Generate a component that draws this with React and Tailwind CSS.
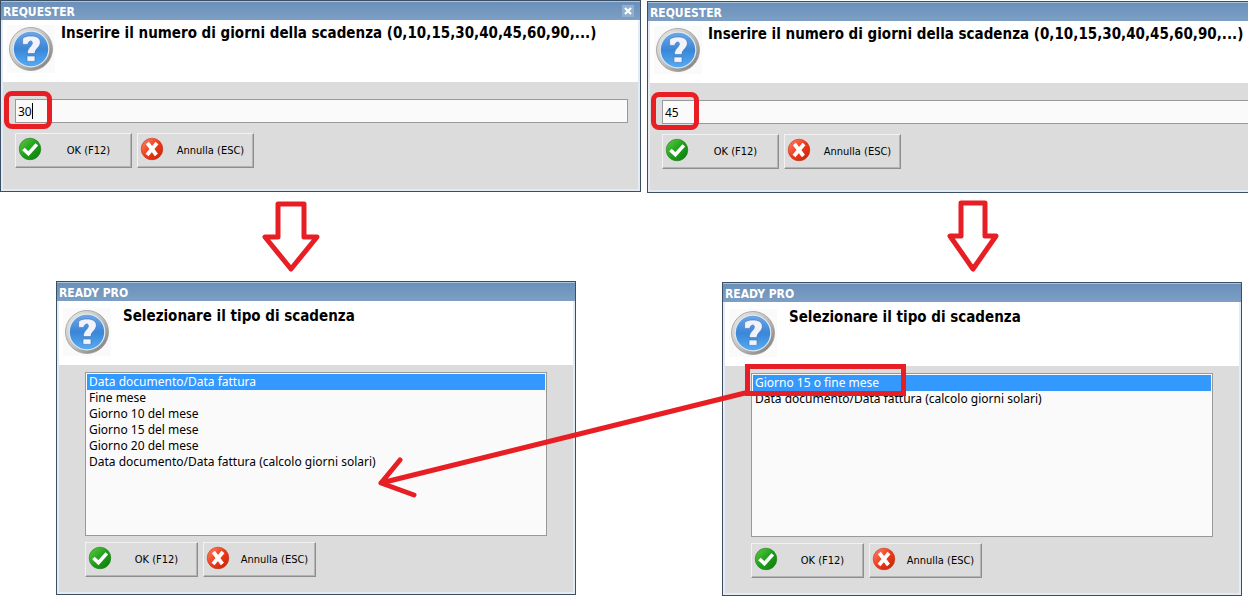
import React from 'react';

const DUE_TYPES = [
  'Data documento/Data fattura',
  'Fine mese',
  'Giorno 10 del mese',
  'Giorno 15 del mese',
  'Giorno 20 del mese',
  'Data documento/Data fattura (calcolo giorni solari)',
];

const DUE_TYPES_45 = [
  'Giorno 15 o fine mese',
  'Data documento/Data fattura (calcolo giorni solari)',
];

// ─── Icons ─────────────────────────────────────────────
function QuestionIcon() {
  return (
    <svg viewBox="0 0 48 48" className="size-12 shrink-0 bg-[#fafafa]" aria-hidden="true">
      <defs>
        <linearGradient id="q-ring" x1="0" y1="0" x2="1" y2="1">
          <stop offset="0%" stopColor="#ededed" />
          <stop offset="50%" stopColor="#c0c0be" />
          <stop offset="100%" stopColor="#74726e" />
        </linearGradient>
        <linearGradient id="q-fill" x1="0" y1="0" x2="0" y2="1">
          <stop offset="0%" stopColor="#6ea8e6" />
          <stop offset="50%" stopColor="#3a86d8" />
          <stop offset="100%" stopColor="#56acf4" />
        </linearGradient>
      </defs>
      <circle cx="24" cy="24" r="21.5" fill="url(#q-ring)" stroke="#9a9a98" strokeWidth="0.8" />
      <circle cx="24" cy="24" r="17.8" fill="url(#q-fill)" stroke="#dfe7f0" strokeWidth="1.2" />
      <path
        d="M15.6 13.4 C18 11.2 22 10.8 25.6 11 C31 11.4 34 14.4 33.2 18.6 C32.4 22.8 28.2 23.4 27.8 28.6 L20.4 28.6 C20.2 22.6 25.4 21.4 25.4 17.8 C25.2 14.8 21.2 15.6 20.8 19.4 L15.6 19.4 Z M20 31 H28 V36.4 H20 Z"
        fill="#f1f3fc" stroke="#3b6fb4" strokeWidth="0.6"
      />
    </svg>
  );
}

function OkIcon() {
  return (
    <svg viewBox="0 0 24 24" className="size-6 shrink-0" aria-hidden="true">
      <defs>
        <linearGradient id="ok-fill" x1="0" y1="0" x2="1" y2="1">
          <stop offset="0%" stopColor="#62cc46" />
          <stop offset="50%" stopColor="#1fa01b" />
          <stop offset="100%" stopColor="#0b7a0b" />
        </linearGradient>
      </defs>
      <circle cx="12" cy="12" r="10.8" fill="url(#ok-fill)" stroke="#1c7d18" strokeWidth="0.6" />
      <path d="M5.4 12 L10.4 16.6 L18.8 7.4" fill="none" stroke="#fff" strokeWidth="3.6" />
    </svg>
  );
}

function CancelIcon() {
  return (
    <svg viewBox="0 0 24 24" className="size-6 shrink-0" aria-hidden="true">
      <defs>
        <linearGradient id="cancel-fill" x1="0" y1="0" x2="1" y2="1">
          <stop offset="0%" stopColor="#ff8a6c" />
          <stop offset="50%" stopColor="#f03a1a" />
          <stop offset="100%" stopColor="#c42206" />
        </linearGradient>
      </defs>
      <circle cx="12" cy="12" r="10.8" fill="url(#cancel-fill)" stroke="#c0341a" strokeWidth="0.6" />
      <path d="M7.4 6 L16.4 18 M17 6 L7 18" fill="none" stroke="#fff" strokeWidth="3.8" />
    </svg>
  );
}

// ─── Dialog parts ──────────────────────────────────────
function Dialog({ caption, closable, clipped, children }) {
  return (
    <section className={`border border-[#3c4e63] bg-[#e4ebf2] ${clipped ? 'border-r-0' : ''}`}>
      <header className="flex h-[19px] items-center justify-between border-t border-[#a9c6dd] bg-linear-to-b from-[#6a90ba] to-[#7d9fc4] pr-1.5 pl-0.5">
        <h2 className="pt-0.5 text-[12px] leading-4 font-bold text-white">{caption}</h2>
        {closable && (
          <button type="button" aria-label="Chiudi" className="flex size-3 items-center justify-center bg-[#91aecd]">
            <svg viewBox="0 0 12 12" className="size-3">
              <path d="M3 3 L9 9 M9 3 L3 9" stroke="#fff" strokeWidth="2.2" />
            </svg>
          </button>
        )}
      </header>
      <div className={`pb-0.5 pl-0.5 ${clipped ? '' : 'pr-0.5'}`}>{children}</div>
    </section>
  );
}

function ActionButton({ icon, size, children }) {
  return (
    <button
      type="button"
      className={`flex h-[35px] items-start border border-t-[#f2f2f2] border-r-[#8e8e8e] border-b-[#8e8e8e] border-l-[#f2f2f2] bg-[#dcdcdc] pt-[3px] pl-0.5 text-[11px] leading-4 shadow-[inset_-1px_-1px_0_#b4b4b4] ${size}`}
    >
      {icon}
      <span className="flex-1 pt-1.5 pl-1 text-center whitespace-nowrap">{children}</span>
    </button>
  );
}

function Actions({ size }) {
  return (
    <div className="flex gap-[5px]">
      <ActionButton icon={<OkIcon />} size={size}>OK (F12)</ActionButton>
      <ActionButton icon={<CancelIcon />} size={size}>Annulla (ESC)</ActionButton>
    </div>
  );
}

function DaysDialog({ id, value, closable, clipped, caret }) {
  return (
    <Dialog caption="REQUESTER" closable={closable} clipped={clipped}>
      <div className="flex h-[62px] gap-1.5 bg-white pt-[5px] pl-1">
        <QuestionIcon />
        <label htmlFor={id} className="text-[15px] leading-4 font-bold whitespace-nowrap">
          Inserire il numero di giorni della scadenza (0,10,15,30,40,45,60,90,...)
        </label>
      </div>
      <div className={`bg-[#dcdcdc] pt-[17px] pb-[21px] pl-3 ${clipped ? '' : 'pr-2.5'}`}>
        <div className="relative mb-2.5">
          <input
            id={id}
            type="text"
            defaultValue={value}
            className={`block h-6 w-full border border-[#999] bg-[#fafafa] px-0.5 font-['Noto_Sans',sans-serif] text-[12px] outline-none ${clipped ? 'border-r-0' : ''}`}
          />
          {caret && <span className="absolute top-1 left-[17px] h-4 w-px bg-black" />}
          <span className="absolute -top-2 -left-[11px] h-[38px] w-12 rounded-lg border-5 border-[#e81e25]" />
        </div>
        <Actions size="w-[117px]" />
      </div>
    </Dialog>
  );
}

function TypeDialog({ items, marked }) {
  return (
    <Dialog caption="READY PRO">
      <div className="flex h-16 gap-3 bg-white pt-[7px] pl-1">
        <QuestionIcon />
        <p className="text-[15px] leading-4 font-bold whitespace-nowrap">Selezionare il tipo di scadenza</p>
      </div>
      <div className="bg-[#dcdcdc] pt-[7px] pr-[26px] pb-[15px] pl-[26px]">
        <ul role="listbox" aria-label="Tipo di scadenza" className="mb-1.5 h-[164px] border border-[#999] bg-[#fafafa] p-px font-['Noto_Sans',sans-serif] text-[12px] leading-4">
          {items.map((item, i) => (
            <li
              key={item}
              role="option"
              aria-selected={i === 0}
              className={`pl-0.5 whitespace-nowrap ${i === 0 ? 'relative bg-[#3399ff] text-white' : ''}`}
            >
              {item}
              {i === 0 && marked && <SelectionMark />}
            </li>
          ))}
        </ul>
        <Actions size="w-[113px]" />
      </div>
    </Dialog>
  );
}

// ─── Red annotations ───────────────────────────────────
function SelectionMark() {
  return (
    <span className="absolute -top-[11px] -left-2 h-8 w-[161px] border-5 border-[#e81e25]">
      <svg width="380" height="118" className="absolute top-4 right-[150px] max-w-none" aria-hidden="true">
        <path
          d="M374 8 L10 98 M29 75 L10 98 L43 110"
          fill="none" stroke="#e81e25" strokeWidth="5" strokeLinecap="round" strokeLinejoin="round"
        />
      </svg>
    </span>
  );
}

function DownArrow({ d, className }) {
  return (
    <svg width="60" height="89" className={`block ${className}`} aria-hidden="true">
      <path d={d} fill="none" stroke="#e81e25" strokeWidth="5" strokeLinejoin="round" />
    </svg>
  );
}

export default function App() {
  return (
    <main className="grid grid-cols-[minmax(0,641fr)_minmax(0,601fr)] items-start gap-1.5 overflow-hidden bg-white font-['DejaVu_Sans_Condensed','DejaVu_Sans',sans-serif] text-black">
      <div>
        <DaysDialog id="days-30" value="30" closable caret />
        <DownArrow className="ml-[261px]" d="M17 12 H43 V45 H56 L30 77 L4 45 H17 Z" />
        <div className="pr-[65px] pl-14">
          <TypeDialog items={DUE_TYPES} />
        </div>
      </div>
      <div className="pt-px">
        <DaysDialog id="days-45" value="45" clipped />
        <DownArrow className="ml-[296px]" d="M18 10 H42 V43 H53 L30 76 L7 43 H18 Z" />
        <div className="pr-1.5 pl-[75px]">
          <TypeDialog items={DUE_TYPES_45} marked />
        </div>
      </div>
    </main>
  );
}
